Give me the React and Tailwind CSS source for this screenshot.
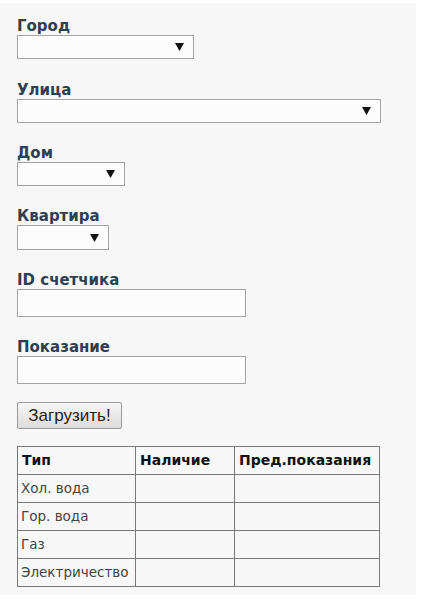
import React from "react";

const Arrow = () => (
  <svg width="9" height="8" viewBox="0 0 9 8" className="mr-[9px]">
    <polygon points="0,0 9,0 4.5,8" fill="#111" />
  </svg>
);

const Select = ({ w, h = "h-[24px]" }) => (
  <div className={`${w} ${h} flex items-center justify-end border border-[#a3a3a3] bg-[#fcfcfc]`}>
    <Arrow />
  </div>
);

const Label = ({ children, mt }) => (
  <div className={`${mt} h-[18px] text-[15px] leading-[18px] font-bold text-[#2e3f52]`}>{children}</div>
);

const Input = () => <div className="w-[229px] h-[28px] border border-[#a3a3a3] bg-[#fcfcfc]" />;

export default function App() {
  const rows = ["Хол. вода", "Гор. вода", "Газ", "Электричество"];
  return (
    <div className="w-[432px] h-[600px] bg-white" style={{ fontFamily: '"DejaVu Sans", sans-serif' }}>
      <div className="w-[416px] h-[592px] mt-[3px] bg-[#f7f7f7] pl-[17px] pt-[14px] flex flex-col">
        <Label mt="">Город</Label>
        <Select w="w-[177px]" />
        <Label mt="mt-[22px]">Улица</Label>
        <Select w="w-[364px]" />
        <Label mt="mt-[21px]">Дом</Label>
        <Select w="w-[108px]" />
        <Label mt="mt-[21px]">Квартира</Label>
        <Select w="w-[92px]" h="h-[25px]" />
        <Label mt="mt-[21px]">ID счетчика</Label>
        <Input />
        <Label mt="mt-[21px]">Показание</Label>
        <Input />
        <div
          className="mt-[18px] w-[105px] h-[27px] flex items-center justify-center border border-[#9a9a9a] rounded-[2px] bg-gradient-to-b from-[#f6f6f6] to-[#dcdcdc] text-[17px] text-[#222]"
          style={{ fontFamily: '"Liberation Sans", sans-serif' }}
        >
          Загрузить!
        </div>
        <table className="mt-[17px] border-collapse w-[362px] table-fixed text-[14px]">
          <colgroup>
            <col className="w-[118px]" />
            <col className="w-[99px]" />
            <col className="w-[145px]" />
          </colgroup>
          <thead>
            <tr className="h-[28px]">
              <th className="border border-[#7a7a7a] text-left font-bold pl-[4px] text-[#111]">Тип</th>
              <th className="border border-[#7a7a7a] text-left font-bold pl-[4px] text-[#111]">Наличие</th>
              <th className="border border-[#7a7a7a] text-left font-bold pl-[4px] text-[#111]">Пред.показания</th>
            </tr>
          </thead>
          <tbody>
            {rows.map((r) => (
              <tr key={r} className="h-[28px]">
                <td className="border border-[#7a7a7a] pl-[3px] text-[13.5px] text-[#444] whitespace-nowrap">{r}</td>
                <td className="border border-[#7a7a7a]"></td>
                <td className="border border-[#7a7a7a]"></td>
              </tr>
            ))}
          </tbody>
        </table>
      </div>
    </div>
  );
}
